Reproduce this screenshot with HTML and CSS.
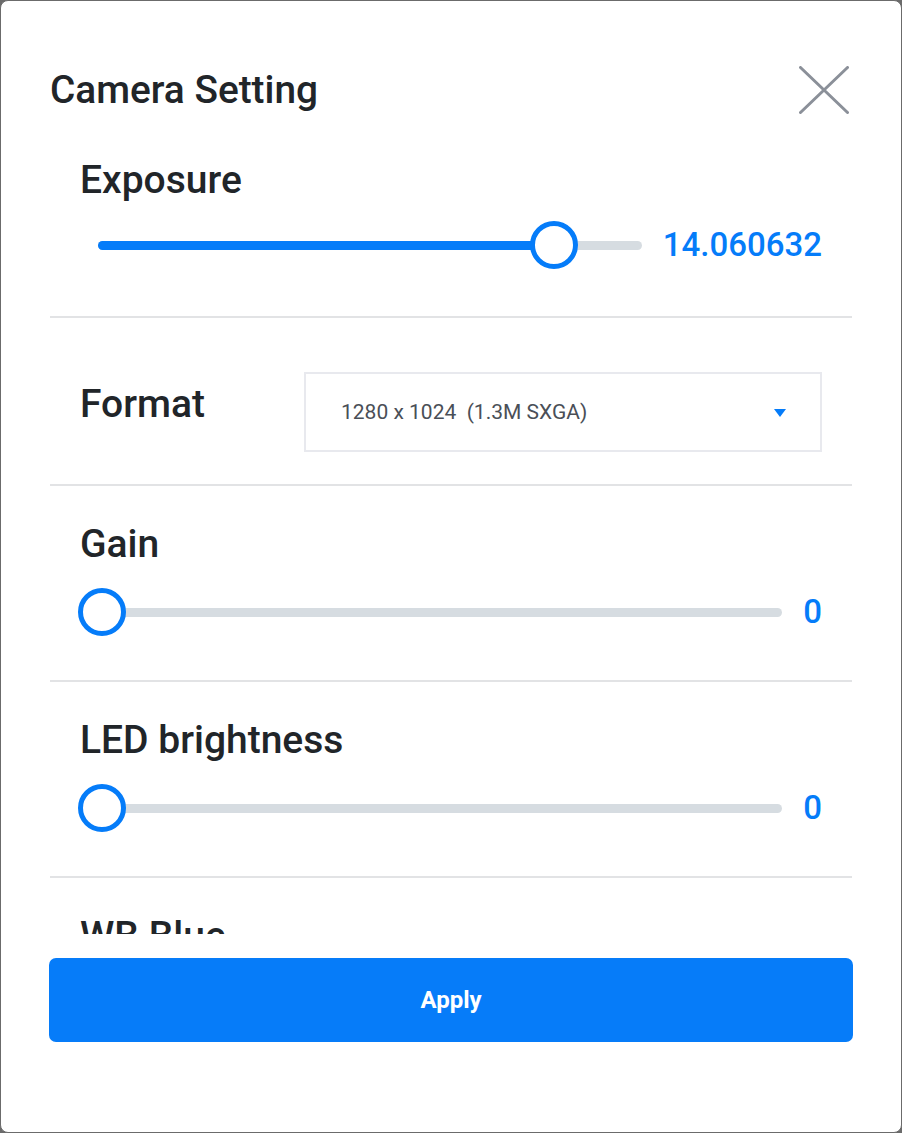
FILE: index.html
```html
<!DOCTYPE html>
<html lang="en">
<head>
<meta charset="utf-8">
<title>Camera Setting</title>
<link rel="stylesheet" href="styles.css">
</head>
<body>
<div class="dialog">
  <header class="dialog-header">
    <h1 class="dialog-title">Camera Setting</h1>
    <button class="close-btn" aria-label="Close">
      <svg width="50" height="48" viewBox="0 0 50 48" aria-hidden="true">
        <path d="M1.5 1.5 L48.5 46.5 M48.5 1.5 L1.5 46.5" stroke="#8b9099" stroke-width="3" stroke-linecap="round" fill="none"/>
      </svg>
    </button>
  </header>

  <div class="dialog-body">
    <section class="setting">
      <div class="setting-label">Exposure</div>
      <div class="slider-row">
        <div class="slider">
          <div class="track"><div class="fill" style="width:456px"></div></div>
          <div class="thumb" style="left:452px"></div>
        </div>
        <div class="value">14.060632</div>
      </div>
    </section>

    <section class="setting setting-format">
      <div class="setting-label format-label">Format</div>
      <div class="select">
        <span class="select-text">1280 x 1024&nbsp; (1.3M SXGA)</span>
        <span class="caret"></span>
      </div>
    </section>

    <section class="setting setting-slider">
      <div class="setting-label">Gain</div>
      <div class="slider-row">
        <div class="slider">
          <div class="track"><div class="fill" style="width:0"></div></div>
          <div class="thumb" style="left:0"></div>
        </div>
        <div class="value">0</div>
      </div>
    </section>

    <section class="setting setting-slider">
      <div class="setting-label">LED brightness</div>
      <div class="slider-row">
        <div class="slider">
          <div class="track"><div class="fill" style="width:0"></div></div>
          <div class="thumb" style="left:0"></div>
        </div>
        <div class="value">0</div>
      </div>
    </section>

    <section class="setting setting-slider">
      <div class="setting-label">WB Blue</div>
      <div class="slider-row">
        <div class="slider">
          <div class="track"><div class="fill" style="width:0"></div></div>
          <div class="thumb" style="left:0"></div>
        </div>
        <div class="value">0</div>
      </div>
    </section>
  </div>

  <div class="dialog-footer">
    <button class="apply-btn">Apply</button>
  </div>
</div>
</body>
</html>
```

FILE: styles.css
```css
* { box-sizing: border-box; }

html, body {
  margin: 0;
  padding: 0;
  background: #6b6b6b;
}

body {
  font-family: Roboto, "Liberation Sans", Arial, sans-serif;
  color: #212529;
}

.dialog {
  width: 902px;
  height: 1133px;
  background: #ffffff;
  border: 1px solid #6b6b6b;
  border-radius: 8px;
  display: flex;
  flex-direction: column;
  overflow: hidden;
}

.dialog-header {
  display: flex;
  align-items: center;
  justify-content: space-between;
  padding: 65px 52px 0 49px;
  height: 113px;
}

.dialog-title {
  margin: 0;
  font-size: 38.8px;
  line-height: 44px;
  font-weight: 500;
  color: #212529;
}

.close-btn {
  width: 50px;
  height: 48px;
  padding: 0;
  border: none;
  background: transparent;
  display: block;
}
.close-btn svg { display: block; }

.dialog-body {
  margin-top: 8px;
  height: 812px;
  overflow: hidden;
  flex: none;
}

.setting {
  margin: 0 49px;
  padding: 36px 30px 47px 30px;
  border-bottom: 2px solid #e2e3e5;
}

.setting-slider {
  padding-bottom: 44px;
}
.setting-slider .slider-row { margin-top: 22px; }

.setting-label {
  font-size: 39px;
  line-height: 44px;
  font-weight: 500;
  color: #212529;
}

.slider-row {
  display: flex;
  align-items: center;
  gap: 21px;
  margin-top: 19px;
  height: 48px;
  margin-left: -2px;
}

.slider {
  position: relative;
  flex: 1;
  height: 48px;
  display: flex;
  align-items: center;
}

.track {
  margin-left: 20px;
  flex: 1;
  height: 9px;
  border-radius: 5px;
  background: #d6dce1;
  overflow: hidden;
}

.fill {
  height: 100%;
  background: #057cf9;
}

.thumb {
  position: absolute;
  top: 0;
  width: 48px;
  height: 48px;
  border-radius: 50%;
  border: 5px solid #057cf9;
  background: #ffffff;
}

.value {
  font-size: 33px;
  line-height: 40px;
  font-weight: 500;
  color: #057cf9;
}

.setting-format {
  display: flex;
  align-items: flex-start;
  padding-top: 54px;
  padding-bottom: 32px;
}

.format-label {
  width: 224px;
  flex: none;
  margin-top: 10px;
}

.select {
  flex: 1;
  height: 80px;
  border: 2px solid #e8e9ee;
  display: flex;
  align-items: center;
  justify-content: space-between;
  padding: 0 34px 0 35px;
}

.select-text {
  font-size: 21px;
  color: #4a4f57;
  font-weight: 400;
}

.caret {
  width: 0;
  height: 0;
  border-left: 6.5px solid transparent;
  border-right: 6.5px solid transparent;
  border-top: 8px solid #057cf9;
  margin-top: 2px;
}

.dialog-footer {
  padding: 24px 48px 0 48px;
}

.apply-btn {
  width: 100%;
  height: 84px;
  border: none;
  border-radius: 7px;
  background: #067cf9;
  color: #ffffff;
  font-family: Roboto, "Liberation Sans", Arial, sans-serif;
  font-size: 24px;
  font-weight: 700;
  display: block;
}
```
